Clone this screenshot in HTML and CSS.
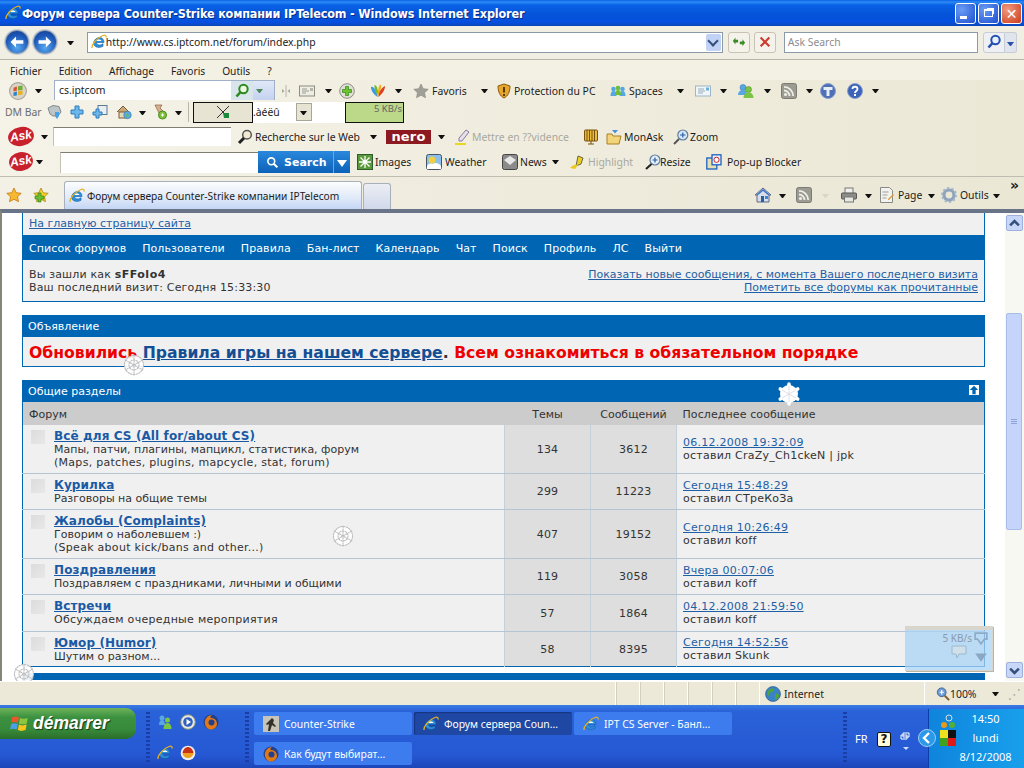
FILE: index.html
```html
<!DOCTYPE html>
<html lang="ru">
<head>
<meta charset="utf-8">
<title>Форум сервера Counter-Strike компании IPTelecom</title>
<link rel="stylesheet" href="styles.css">
</head>
<body>
<svg class="defs" width="0" height="0" aria-hidden="true">
  <symbol id="ie" viewBox="0 0 16 16"><path d="M2.500 9.500C3 5.500 6 3.500 8.500 3.500c2.800 0 4.500 2 4.500 5H5.500c.2 2.600 3.500 3.500 6.500 1.200v2.600c-4 2.400-9.300.7-9.500-2.800z" fill="#2f8fd8" stroke="#0f5ca8" stroke-width=".6"/><path d="M1 14C.5 11 5 4 12 1.500c2-.7 3.500 0 3 2" fill="none" stroke="#e8b020" stroke-width="1.300"/><path d="M5.700 7h4.700C10.200 5 6 5 5.700 7z" fill="#fff"/></symbol>
  <symbol id="star" viewBox="0 0 16 16"><path d="M8 1l2.200 4.700 5 .6-3.700 3.400 1 5L8 12.300 3.500 14.700l1-5L.8 6.300l5-.6z" fill="#f5b82e" stroke="#c67a10" stroke-width=".8"/></symbol>
  <symbol id="gstar" viewBox="0 0 16 16"><path d="M8 1l2.200 4.700 5 .6-3.700 3.400 1 5L8 12.300 3.500 14.700l1-5L.8 6.300l5-.6z" fill="#f5d02e" stroke="#b08a10" stroke-width=".8"/><path d="M2 9h3V6h3v3h3v3H8v3H5v-3H2z" fill="#6cbf2f" stroke="#2f7d10" stroke-width=".6"/></symbol>
  <symbol id="greystar" viewBox="0 0 16 16"><path d="M8 1l2.200 4.700 5 .6-3.700 3.400 1 5L8 12.300 3.500 14.700l1-5L.8 6.300l5-.6z" fill="#a0a098" stroke="#85857d" stroke-width=".6"/></symbol>
  <symbol id="live" viewBox="0 0 16 16"><circle cx="8" cy="8" r="7.500" fill="#d8d4c8" stroke="#a8a498"/><path d="M4 5l3-1v3.500L4 8.500z" fill="#e05030"/><path d="M8 3.800l4-.8v4l-4 .5z" fill="#70b030"/><path d="M4 9.300l3-.9v3.500l-3 .6z" fill="#3080d0"/><path d="M8 8.300l4-.5V11l-4 .8z" fill="#eab020"/></symbol>
  <symbol id="mag" viewBox="0 0 16 16"><circle cx="9.500" cy="6" r="4.200" fill="#eef6e4" stroke="#2c8a1c" stroke-width="2"/><path d="M6.500 9l-4 4.500" stroke="#2c8a1c" stroke-width="2.600"/></symbol>
  <symbol id="magb" viewBox="0 0 16 16"><circle cx="9.500" cy="6" r="4.200" fill="#e8f0fc" stroke="#2450b0" stroke-width="2"/><path d="M6.500 9l-4 4.500" stroke="#2450b0" stroke-width="2.600"/></symbol>
  <symbol id="magk" viewBox="0 0 16 16"><circle cx="10" cy="5.800" r="4.300" fill="#f2ead0" stroke="#555" stroke-width="1.500"/><path d="M7 9l-5 5" stroke="#222" stroke-width="3"/></symbol>
  <symbol id="plus" viewBox="0 0 16 16"><circle cx="8" cy="8" r="7.300" fill="#e0dfd4" stroke="#908e84"/><path d="M6.500 3.500h3v3h3v3h-3v3h-3v-3h-3v-3h3z" fill="#6fc32c" stroke="#2c8a1c" stroke-width=".7"/></symbol>
  <symbol id="card" viewBox="0 0 16 16"><rect x=".5" y="3" width="15" height="10" fill="#efeee4" stroke="#8c8c80"/><path d="M3 6h5M3 8h7M3 10h4" stroke="#9a9a90"/><rect x="11" y="5" width="3" height="3" fill="#b4b4a8"/></symbol>
  <symbol id="msn" viewBox="0 0 16 16"><path d="M1 4c2-1 4 1 6 7L8 14C4 12 1 8 1 4z" fill="#3d9ae0"/><path d="M4.500 2c2 0 3 3 3.500 7l-.5 3C5.500 9 4 5 4.500 2z" fill="#70b82a"/><path d="M10 1.500c2 .5 1 5-1 10L8 14c-.5-4 0-9 2-12.500z" fill="#f0b010"/><path d="M15 3c0 4-3 8-6.500 11 0-5 3-9 6.500-11z" fill="#e03c20"/></symbol>
  <symbol id="shield" viewBox="0 0 16 16"><path d="M8 1l6 2c0 6-2 10-6 12C4 13 2 9 2 3z" fill="#e6a72a" stroke="#8a5a10"/><path d="M7 4h2v5.500H7zM7 11h2v2H7z" fill="#5a3a08"/></symbol>
  <symbol id="spaces" viewBox="0 0 16 16"><circle cx="3.500" cy="6" r="2.300" fill="#55a7e0"/><circle cx="8" cy="5" r="2.300" fill="#6fbe38"/><circle cx="12.500" cy="6" r="2.300" fill="#55a7e0"/><path d="M.5 13c0-3.500 1-5 3-5s3 1.500 3 5zM9.500 13c0-3.500 1-5 3-5s3 1.500 3 5z" fill="#55a7e0"/><path d="M5 12c0-3.500 1-5 3-5s3 1.500 3 5z" fill="#6fbe38"/></symbol>
  <symbol id="mail" viewBox="0 0 16 16"><rect x=".5" y="3" width="15" height="10" fill="#f0f5f8" stroke="#9db6c8"/><path d="M3 6h6M3 8h7M3 10h5" stroke="#96aabc"/><rect x="11" y="4.500" width="3" height="3" fill="#6ab0dc"/></symbol>
  <symbol id="people" viewBox="0 0 16 16"><circle cx="5" cy="4.500" r="3" fill="#5aa6e0" stroke="#2a70a8" stroke-width=".5"/><path d="M0 12c0-3 2-5 5-5s4 2 4 5z" fill="#5aa6e0"/><circle cx="10.500" cy="6.500" r="3" fill="#7cc443" stroke="#3d8518" stroke-width=".5"/><path d="M5.500 15c0-3.500 2-5.500 5-5.500s5 2 5 5.500z" fill="#7cc443"/></symbol>
  <symbol id="rss" viewBox="0 0 16 16"><rect x=".5" y=".5" width="15" height="15" rx="2" fill="#9b9b92" stroke="#7c7c74"/><circle cx="4.500" cy="11.500" r="1.600" fill="#efefe8"/><path d="M3 7.500c3 0 5.500 2.500 5.500 5.500M3 3.800c5 0 9.200 4.200 9.200 9.200" fill="none" stroke="#efefe8" stroke-width="1.800"/></symbol>
  <symbol id="tool" viewBox="0 0 16 16"><circle cx="8" cy="8" r="7.500" fill="#4d70b8" stroke="#8aa0cc"/><path d="M3.500 4h9v3h-3v6h-3V7h-3z" fill="#e8eef8"/></symbol>
  <symbol id="qm" viewBox="0 0 16 16"><circle cx="8" cy="8" r="7.500" fill="#3b63b8" stroke="#8aa0cc"/><path d="M5.500 6c0-3 5-3 5 0 0 2-2.500 2-2.500 4" fill="none" stroke="#fff" stroke-width="1.800"/><rect x="7" y="11" width="2" height="2" fill="#fff"/></symbol>
  <symbol id="hand" viewBox="0 0 16 16"><path d="M1 4l5-2.500 6 1L14 8l-3 4H6L3 10z" fill="#bcc6c8" stroke="#6a7478" stroke-width=".8"/><path d="M8 8h4v4l-2 3-2-3z" fill="#4aa0e0"/></symbol>
  <symbol id="bplus" viewBox="0 0 16 16"><path d="M6 2h4v4h4v4h-4v4H6v-4H2V6h4z" fill="#6db6ea" stroke="#2d7cc0"/></symbol>
  <symbol id="bcopy" viewBox="0 0 16 16"><rect x="6" y="1.500" width="9" height="9" fill="#e8eef2" stroke="#5c7a90"/><path d="M4 5h3v3h3v3H7v3H4v-3H1V8h3z" fill="#6db6ea" stroke="#2d7cc0"/></symbol>
  <symbol id="homeg" viewBox="0 0 16 16"><path d="M1 8l6-6 6 6" fill="#c8a878" stroke="#7a5c30"/><rect x="3" y="8" width="8" height="6" fill="#e4d8b8" stroke="#7a5c30"/><circle cx="11.500" cy="11" r="3.800" fill="#5aaae0" stroke="#2a70a8" stroke-width=".5"/><path d="M10 9.500l3 2-2 2z" fill="#6fbe38"/></symbol>
  <symbol id="tack" viewBox="0 0 16 16"><path d="M3 1h7l-2 3 3 3-4 2z" fill="#d8b090" stroke="#8a6040" stroke-width=".7"/><circle cx="10.500" cy="11" r="4" fill="#82c040" stroke="#4a8a20"/><path d="M9 11h3M10.500 9.500v3" stroke="#fff"/></symbol>
  <symbol id="pen" viewBox="0 0 16 16"><path d="M11 1l3 2-7 9H4v-3z" fill="#e4dfe8" stroke="#8a7a9a"/><path d="M0 15h11" stroke="#e8d820" stroke-width="2"/></symbol>
  <symbol id="rad" viewBox="0 0 16 16"><rect x="1.500" y="1" width="13" height="11" rx="1" fill="#e8bb3e" stroke="#7a5208"/><path d="M4 1v11M6.500 1v11M9 1v11M11.500 1v11" stroke="#7a5208"/><path d="M8 12v3M5 15h6" stroke="#7a5208"/></symbol>
  <symbol id="folder" viewBox="0 0 16 16"><path d="M1 5h5l1 2h8l-2 8H1z" fill="#f2d47a" stroke="#a88020"/><path d="M6 1h6L9 4.500z" fill="#4a90d8"/></symbol>
  <symbol id="zoomi" viewBox="0 0 16 16"><circle cx="9.800" cy="6" r="5" fill="#d8e6f4" stroke="#5c7c9a" stroke-width="1.200"/><path d="M7 6h5.500M9.800 3.500v5" stroke="#2a5ca8" stroke-width="1.200"/><path d="M6 10l-5 5" stroke="#555" stroke-width="2"/></symbol>
  <symbol id="imgs" viewBox="0 0 16 16"><rect x=".5" y=".5" width="15" height="15" fill="#5a9a3a" stroke="#2d5c2d"/><path d="M8 2v12M2 8h12M3.500 3.500l9 9M12.500 3.500l-9 9" stroke="#fff" stroke-width="1.300"/></symbol>
  <symbol id="wthr" viewBox="0 0 16 16"><rect x=".5" y=".5" width="15" height="15" rx="2" fill="#8cc0ea" stroke="#456"/><circle cx="6" cy="6" r="3.500" fill="#f2d040"/><path d="M1 12c1-3 5-3 6-2 2-2 6-1 8 2v3H1z" fill="#fff"/></symbol>
  <symbol id="news" viewBox="0 0 16 16"><rect x=".5" y=".5" width="15" height="15" rx="2" fill="#8b8b8b" stroke="#444"/><path d="M2 6l6-4 6 4-6 5z" fill="#e8e8e8"/></symbol>
  <symbol id="hl" viewBox="0 0 16 16"><path d="M8 2l5 2-2 6-5 2z" fill="#ecd020" stroke="#333" stroke-width=".7"/><path d="M0 14c2-2 4-4 8-3l-3 4z" fill="#ecc820"/></symbol>
  <symbol id="rsz" viewBox="0 0 16 16"><circle cx="10" cy="6" r="5" fill="#e4eef6" stroke="#5c7c9a" stroke-width="1.200"/><path d="M7.500 6h5M10 3.500v5" stroke="#2a5ca8" stroke-width="1.200"/><path d="M6.500 10L1 15" stroke="#222" stroke-width="2"/></symbol>
  <symbol id="popup" viewBox="0 0 16 16"><rect x=".8" y="4" width="10" height="11" fill="#e8e0b4" stroke="#1a62c0" stroke-width="1.300"/><rect x="6" y=".8" width="9" height="10" fill="#e8f0fa" stroke="#1a62c0" stroke-width="1.300"/><circle cx="10.500" cy="5.800" r="2.600" fill="#fff" stroke="#d02020"/></symbol>
  <symbol id="home" viewBox="0 0 16 16"><path d="M0 8l8-7 8 7-2 0v7H2V8z" fill="#d8dee8" stroke="#5a6a8a"/><path d="M2 8l6-5 6 5" fill="none" stroke="#3a70c8" stroke-width="1.500"/><rect x="6" y="9" width="3" height="6" fill="#2a5ca8"/><rect x="10" y="9" width="3" height="3" fill="#3a88d8"/></symbol>
  <symbol id="print" viewBox="0 0 16 16"><rect x="4" y="1" width="8" height="6" fill="#f0f0ea" stroke="#777"/><rect x=".5" y="6" width="15" height="6" rx="1" fill="#8c8c88" stroke="#555"/><rect x="3.500" y="10" width="9" height="5" fill="#e8e8e2" stroke="#777"/></symbol>
  <symbol id="page" viewBox="0 0 16 16"><path d="M1.500.5h9l3 3v12h-12z" fill="#f2f2ee" stroke="#8a8a84"/><path d="M3.500 5h6M3.500 8h5M3.500 11h4" stroke="#a0a09a"/><path d="M9 12l5-5 1 1-5 5H9z" fill="#d8a040"/></symbol>
  <symbol id="gear" viewBox="0 0 16 16"><circle cx="8" cy="8" r="5" fill="none" stroke="#8fa4bc" stroke-width="3.200"/><circle cx="8" cy="8" r="7" fill="none" stroke="#a8b8c8" stroke-width="2" stroke-dasharray="2.200 2.200"/></symbol>
  <symbol id="globe" viewBox="0 0 16 16"><circle cx="8" cy="8" r="7.500" fill="#3a82c8" stroke="#234e80" stroke-width=".6"/><path d="M3 5c2-3 5-3 6-2s-1 3-3 3-1 4-2 4-2-3-1-5zM10 8c2-1 4 0 4 2s-2 3-3 4-1-2-1-3z" fill="#4fa33c"/></symbol>
  <symbol id="zm" viewBox="0 0 16 16"><circle cx="6.500" cy="6" r="5" fill="#6b9cd8" stroke="#3a5a8a"/><path d="M4 6h5M6.500 3.500v5" stroke="#fff" stroke-width="1.400"/><path d="M10 10l5 5" stroke="#7a5c30" stroke-width="2.200"/></symbol>
  <symbol id="flake" viewBox="0 0 24 24"><circle cx="12" cy="12" r="9.500" fill="#fff" fill-opacity=".92"/><g fill="none" stroke="#bdbdbd" stroke-width="1.100" stroke-linecap="round" stroke-dasharray="1.500 1.300"><path d="M12 2v20M3.300 7l17.400 10M20.700 7L3.300 17"/><circle cx="12" cy="12" r="9.500"/><circle cx="12" cy="12" r="5"/></g></symbol>
  <symbol id="flake2" viewBox="0 0 24 24"><circle cx="12" cy="12" r="9" fill="#fff"/><g fill="none" stroke="#fff" stroke-width="3.600" stroke-linecap="round"><path d="M12 2v20M3.300 7l17.400 10M20.700 7L3.300 17"/></g><path stroke="#d4d8de" stroke-width=".8" d="M12 4v16M5 8l14 8M19 8L5 16"/></symbol>
  <symbol id="cs" viewBox="0 0 16 16"><rect width="16" height="16" fill="#c8c4b8"/><path d="M9 2l2 2-1 3 3 3-1 1-3-2-2 6H5l1-7-2 1-1-1 4-4z" fill="#33302a"/></symbol>
  <symbol id="ff" viewBox="0 0 16 16"><circle cx="8" cy="8" r="7.500" fill="#25408a"/><path d="M2 10c-1-5 3-9 7-9-2 1-2 3-1 3 3 0 6 2 6 6 0 3-3 5.500-6 5.500S2.500 13 2 10z" fill="#e07818"/><circle cx="8.500" cy="8.500" r="3" fill="#25408a"/></symbol>
  <symbol id="msn2" viewBox="0 0 16 16"><circle cx="5" cy="4" r="2.500" fill="#5aa6e0"/><path d="M2 11c0-3 1-5 3-5s3 2 3 5z" fill="#5aa6e0"/><circle cx="10.500" cy="6" r="2.500" fill="#7cc443"/><path d="M6.500 15c0-4 2-6 4-6s4 2 4 6z" fill="#7cc443"/></symbol>
  <symbol id="wmp" viewBox="0 0 16 16"><circle cx="8" cy="8" r="7.300" fill="#e8e8e8" stroke="#809070"/><circle cx="8" cy="8" r="4.800" fill="#3060c0"/><path d="M6.500 5l4.500 3-4.500 3z" fill="#fff"/></symbol>
  <symbol id="redc" viewBox="0 0 16 16"><circle cx="8" cy="8" r="7.300" fill="#f0f0f0"/><path d="M2.500 8C3 4 6 2 8 2s5 2 5.500 6z" fill="#c83018"/><path d="M2.500 8h11C13 12 10 13 8 13s-5-1-5.500-5z" fill="#f0a020"/></symbol>
  <symbol id="flag" viewBox="0 0 18 18"><path d="M2 3c2-1 4-1 6 0l-1 5c-2-1-4-1-6 0z" fill="#e8582a"/><path d="M9 3.500c2 1 4 1 7 0l-1 5c-2 1-5 1-7 0z" fill="#8cc63e"/><path d="M1 9c2-1 4-1 6 0l-1 5c-2-1-4-1-6 0z" fill="#4aa0e8"/><path d="M8 9.500c2 1 4 1 7 0l-1 5c-3 1-5 1-7 0z" fill="#f6c41c"/></symbol>
</svg>

<div class="win">
  <header class="title">
    <svg class="i16 title-ic"><use href="#ie"/></svg>
    <span class="title-text">Форум сервера Counter-Strike компании IPTelecom - Windows Internet Explorer</span>
    <span class="wbtn wmin"><b></b></span>
    <span class="wbtn wmax"><b></b></span>
    <span class="wbtn wclose">✕</span>
  </header>

  <div class="addr">
    <span class="nav-btn"><svg viewBox="0 0 24 24"><path d="M5 12l6-6v4h8v4h-8v4z" fill="#fff"/></svg></span>
    <span class="nav-btn nav-fwd"><svg viewBox="0 0 24 24"><path d="M19 12l-6-6v4H5v4h8v4z" fill="#fff"/></svg></span>
    <i class="ar ar-nav"></i>
    <div class="addr-box">
      <svg class="i16"><use href="#ie"/></svg>
      <span class="url">http://www.cs.iptcom.net/forum/index.php</span>
      <span class="drop"></span>
    </div>
    <span class="sq"><svg viewBox="0 0 16 16"><path d="M1 7l3-4v2.500h3v3H4V11zM15 9l-3 4v-2.500H9v-3h3V5z" fill="#3c8a28"/></svg></span>
    <span class="sq sq-stop"><svg viewBox="0 0 16 16"><path d="M3 3l10 10M13 3L3 13" stroke="#cc3a30" stroke-width="2.400"/></svg></span>
    <div class="ask-box">Ask Search</div>
    <span class="sch"><svg class="i16"><use href="#magb"/></svg></span>
    <span class="sch-d"><i class="ar ar-b"></i></span>
  </div>

  <nav class="menu">
    <span>Fichier</span><span>Edition</span><span>Affichage</span><span>Favoris</span><span>Outils</span><span>?</span>
  </nav>

  <div class="tb row2">
    <svg class="i18"><use href="#live"/></svg>
    <i class="ar"></i>
    <div class="wls"><span class="wls-in">cs.iptcom</span><span class="wls-go"><svg class="i16"><use href="#mag"/></svg></span><span class="wls-d"><i class="ar ar-g"></i></span></div>
    <svg class="sep-d" viewBox="0 0 10 12"><path d="M5 0v12" stroke="#b8b6a8"/><path d="M3.500 6L1 4v4zM6.500 6L9 4v4z" fill="#a8a89c"/></svg>
    <svg class="i16"><use href="#card"/></svg>
    <i class="ar"></i>
    <svg class="i16"><use href="#plus"/></svg>
    <svg class="i16"><use href="#msn"/></svg>
    <i class="ar"></i>
    <svg class="i16"><use href="#greystar"/></svg>
    <span>Favoris</span>
    <i class="ar"></i>
    <svg class="i16"><use href="#shield"/></svg>
    <span>Protection du PC</span>
    <svg class="i16"><use href="#spaces"/></svg>
    <span>Spaces</span>
    <i class="ar"></i>
    <svg class="i16"><use href="#mail"/></svg>
    <i class="ar"></i>
    <svg class="i16"><use href="#people"/></svg>
    <i class="ar"></i>
    <svg class="i16"><use href="#rss"/></svg>
    <i class="ar"></i>
    <svg class="i16"><use href="#tool"/></svg>
    <svg class="i16"><use href="#qm"/></svg>
    <i class="ar"></i>
  </div>

  <div class="tb row3">
    <span class="muted">DM Bar</span>
    <svg class="i16"><use href="#hand"/></svg>
    <svg class="i16"><use href="#bplus"/></svg>
    <svg class="i16"><use href="#bcopy"/></svg>
    <svg class="i16"><use href="#homeg"/></svg>
    <i class="ar"></i>
    <svg class="i16"><use href="#tack"/></svg>
    <i class="ar"></i>
    <i class="vsep"></i>
    <span class="boxed"><svg class="i16" viewBox="0 0 16 16"><path d="M2 2l12 12M14 2L2 14" stroke="#333"/><path d="M8 9h6v5H9z" fill="#1c8a3c"/></svg></span>
    <span class="sel"><span>.àéëû</span><i class="sel-b"><i class="ar"></i></i></span>
    <span class="wht"></span>
    <span class="kb">5 KB/s</span>
  </div>

  <div class="tb row4">
    <span class="ask">Ask</span>
    <i class="ar"></i>
    <span class="in in4"></span>
    <svg class="i16"><use href="#magk"/></svg>
    <span>Recherche sur le Web</span>
    <i class="ar"></i>
    <span class="nero">nero</span>
    <i class="ar"></i>
    <svg class="i16"><use href="#pen"/></svg>
    <span class="grey">Mettre en ??vidence</span>
    <svg class="i16"><use href="#rad"/></svg>
    <svg class="i16"><use href="#folder"/></svg>
    <span>MonAsk</span>
    <svg class="i16"><use href="#zoomi"/></svg>
    <span>Zoom</span>
  </div>

  <div class="tb row5">
    <span class="ask ask5">Ask</span>
    <i class="ar"></i>
    <div class="asks"><span class="in in5"></span><span class="sbtn"><svg viewBox="0 0 16 16"><circle cx="6.500" cy="6.500" r="4.200" fill="none" stroke="#fff" stroke-width="2"/><path d="M9.500 9.500L14 14" stroke="#fff" stroke-width="2.600"/></svg>Search</span><span class="sbtn-d"><i class="ar ar-w"></i></span></div>
    <svg class="i16"><use href="#imgs"/></svg>
    <span>Images</span>
    <svg class="i16"><use href="#wthr"/></svg>
    <span>Weather</span>
    <svg class="i16"><use href="#news"/></svg>
    <span>News</span>
    <i class="ar"></i>
    <svg class="i16"><use href="#hl"/></svg>
    <span class="grey">Highlight</span>
    <svg class="i16"><use href="#rsz"/></svg>
    <span>Resize</span>
    <svg class="i16"><use href="#popup"/></svg>
    <span>Pop-up Blocker</span>
  </div>

  <div class="tabs">
    <svg class="i16"><use href="#star"/></svg>
    <svg class="i16"><use href="#gstar"/></svg>
    <div class="tab"><svg class="i16"><use href="#ie"/></svg><span>Форум сервера Counter-Strike компании IPTelecom</span></div>
    <div class="tab-new"></div>
    <svg class="i16"><use href="#home"/></svg>
    <i class="ar"></i>
    <svg class="i16"><use href="#rss"/></svg>
    <i class="ar ar-faint"></i>
    <svg class="i16"><use href="#print"/></svg>
    <i class="ar"></i>
    <svg class="i16"><use href="#page"/></svg>
    <span>Page</span>
    <i class="ar"></i>
    <svg class="i16"><use href="#gear"/></svg>
    <span>Outils</span>
    <i class="ar"></i>
    <span class="more">»</span>
  </div>

  <main class="view">
    <div class="page">
      <section class="top">
        <a class="lnk" href="#">На главную страницу сайта</a>
      </section>
      <nav class="bar links">
        <span>Список форумов</span><span>Пользователи</span><span>Правила</span><span>Бан-лист</span><span>Календарь</span><span>Чат</span><span>Поиск</span><span>Профиль</span><span>ЛС</span><span>Выйти</span>
      </nav>
      <section class="info">
        <div class="info-l">Вы зашли как <b>sFFolo4</b><br>Ваш последний визит: Сегодня 15:33:30</div>
        <div class="info-r"><a class="lnk" href="#">Показать новые сообщения, с момента Вашего последнего визита</a><br><a class="lnk" href="#">Пометить все форумы как прочитанные</a></div>
      </section>
      <div class="bar head">Объявление</div>
      <section class="notice"><span class="red">Обновились</span> <a href="#" class="nlink">Правила игры на нашем сервере</a><b>.</b> <span class="red">Всем ознакомиться в обязательном порядке</span></section>
      <div class="bar head">Общие разделы<span class="upb"><svg viewBox="0 0 12 12"><path d="M6 1l5 5H8v5H4V6H1z" fill="#0066b3"/></svg></span></div>
      <table class="ft">
        <thead><tr><th class="c1">Форум</th><th class="c2">Темы</th><th class="c3">Сообщений</th><th class="c4">Последнее сообщение</th></tr></thead>
        <tbody>
          <tr><td class="c1"><div class="fc"><i class="bul"></i><div><a class="ftitle" href="#">Всё для CS (All for/about CS)</a><p>Мапы, патчи, плагины, мапцикл, статистика, форум<br><span class="lat">(Maps, patches, plugins, mapcycle, stat, forum)</span></p></div></div></td><td class="c2">134</td><td class="c3">3612</td><td class="c4"><a class="lnk" href="#">06.12.2008 19:32:09</a><br>оставил CraZy_Ch1ckeN | jpk</td></tr>
          <tr><td class="c1"><div class="fc"><i class="bul"></i><div><a class="ftitle" href="#">Курилка</a><p>Разговоры на общие темы</p></div></div></td><td class="c2">299</td><td class="c3">11223</td><td class="c4"><a class="lnk" href="#">Сегодня 15:48:29</a><br>оставил СТреКоЗа</td></tr>
          <tr><td class="c1"><div class="fc"><i class="bul"></i><div><a class="ftitle" href="#">Жалобы (Complaints)</a><p>Говорим о наболевшем :)<br><span class="lat">(Speak about kick/bans and other...)</span></p></div></div></td><td class="c2">407</td><td class="c3">19152</td><td class="c4"><a class="lnk" href="#">Сегодня 10:26:49</a><br>оставил koff</td></tr>
          <tr><td class="c1"><div class="fc"><i class="bul"></i><div><a class="ftitle" href="#">Поздравления</a><p>Поздравляем с праздниками, личными и общими</p></div></div></td><td class="c2">119</td><td class="c3">3058</td><td class="c4"><a class="lnk" href="#">Вчера 00:07:06</a><br>оставил koff</td></tr>
          <tr class="r37"><td class="c1"><div class="fc"><i class="bul"></i><div><a class="ftitle" href="#">Встречи</a><p><span class="lat">Обсуждаем очередные мероприятия</span></p></div></div></td><td class="c2">57</td><td class="c3">1864</td><td class="c4"><a class="lnk" href="#">04.12.2008 21:59:50</a><br>оставил koff</td></tr>
          <tr class="r35"><td class="c1"><div class="fc"><i class="bul"></i><div><a class="ftitle" href="#">Юмор (Humor)</a><p>Шутим о разном...</p></div></div></td><td class="c2">58</td><td class="c3">8395</td><td class="c4"><a class="lnk" href="#">Сегодня 14:52:56</a><br>оставил Skunk</td></tr>
        </tbody>
      </table>
      <div class="bar tail"></div>
    </div>
    <aside class="sb">
      <span class="sb-btn"><svg viewBox="0 0 12 12"><path d="M2.500 7.500L6 4l3.500 3.500" fill="none" stroke="#34507c" stroke-width="2"/></svg></span>
      <span class="sb-gap"></span>
      <span class="sb-thumb"><i></i></span>
      <span class="sb-fill"></span>
      <span class="sb-btn"><svg viewBox="0 0 12 12"><path d="M2.500 4.500L6 8l3.500-3.500" fill="none" stroke="#34507c" stroke-width="2"/></svg></span>
    </aside>
    <svg class="flake f1"><use href="#flake"/></svg>
    <svg class="flake f2"><use href="#flake2"/></svg>
    <svg class="flake f3"><use href="#flake"/></svg>
    <svg class="flake f4"><use href="#flake"/></svg>
    <div class="meter">
      <span class="meter-kb">5 KB/s</span>
      <svg class="meter-ic" viewBox="0 0 18 16"><path d="M1 2h14v8H8l-2 4-1-4H1z" fill="#cfe0ea" stroke="#9cb8cc"/></svg>
      <span class="meter-side"><svg viewBox="0 0 12 12"><path d="M1 1h10v5H9L6 10 3 6H1z" fill="none" stroke="#8cacc8" stroke-width="1.500"/></svg><svg viewBox="0 0 12 12"><path d="M1 3h10L6 10z" fill="#8aa8c4"/></svg></span>
    </div>
  </main>

  <footer class="status">
    <span></span><i></i><i></i><i></i><i></i><i></i><i></i>
    <div class="st-net"><svg class="i16"><use href="#globe"/></svg>Internet</div>
    <div class="st-zoom"><svg class="i14"><use href="#zm"/></svg>100%<i class="ar"></i><span class="grip">⋰</span></div>
  </footer>

  <div class="taskbar">
    <div class="start"><svg class="flag"><use href="#flag"/></svg><span>démarrer</span></div>
    <i class="dots dots-1"></i>
    <div class="quick">
      <svg class="i16"><use href="#msn2"/></svg>
      <svg class="i16"><use href="#wmp"/></svg>
      <svg class="i16"><use href="#ff"/></svg>
      <svg class="i16"><use href="#ie"/></svg>
      <svg class="i16"><use href="#redc"/></svg>
    </div>
    <i class="dots"></i>
    <div class="tasks">
      <div class="task"><svg class="i16"><use href="#cs"/></svg><span>Counter-Strike</span></div>
      <div class="task active"><svg class="i16"><use href="#ie"/></svg><span>Форум сервера Coun...</span></div>
      <div class="task"><svg class="i16"><use href="#ie"/></svg><span>IPT CS Server - Банл...</span></div>
      <div class="task"><svg class="i16"><use href="#ff"/></svg><span>Как будут выбират...</span></div>
    </div>
    <i class="dots dots-r"></i>
    <span class="fr">FR</span>
    <span class="help">?</span>
    <span class="updn"><svg viewBox="0 0 12 24"><path d="M3 3h6v4H3zM1 5h6v4H1z" fill="none" stroke="#fff"/><path d="M3 17h6l-3 3z" fill="#cfe0ff"/></svg></span>
    <span class="chev"><svg viewBox="0 0 16 16"><path d="M10 3L5 8l5 5" fill="none" stroke="#fff" stroke-width="2.400"/></svg></span>
    <div class="tray">
      <div class="tray-ic">
        <svg class="i16" viewBox="0 0 16 16"><circle cx="9" cy="4" r="3" fill="none" stroke="#ddd"/><circle cx="4" cy="11" r="3" fill="#e89a18"/><circle cx="12" cy="11" r="3" fill="#54b030"/></svg>
        <svg class="i16" viewBox="0 0 16 16"><rect width="8" height="8" fill="#f0e020"/><rect x="8" width="8" height="8" fill="#111"/><rect y="8" width="8" height="8" fill="#40a020"/><rect x="8" y="8" width="8" height="8" fill="#e01818"/></svg>
      </div>
      <div class="clock"><span>14:50</span><span>lundi</span><span>8/12/2008</span></div>
    </div>
  </div>
</div>
</body>
</html>
```
FILE: styles.css
```css
* { box-sizing: border-box; }
html, body { margin: 0; height: 768px; overflow: hidden; }
body { font-family: "Noto Sans", "DejaVu Sans", sans-serif; font-size: 10.400px; color: #1c1c1c; background: #ece9d8; }
.defs { position: absolute; }
svg { display: block; flex: none; }
i { font-style: normal; display: block; }
a { color: inherit; }
.i14 { width: 14px; height: 14px; }
.i16 { width: 16px; height: 16px; }
.i18 { width: 18px; height: 18px; }
.win { display: flex; flex-direction: column; width: 1024px; height: 768px; }

/* title bar */
.title { height: 26px; flex: none; display: flex; align-items: center; padding: 0 2px 0 5px; color: #fff;
  background: linear-gradient(#0a5fe8 0, #2c8cf4 2px, #0a62e6 5px, #0454d8 14px, #0650e0 22px, #0a46b8 26px); }
.title-ic { margin-right: 1px; }
.title-text { flex: 1; font: bold 12.500px "DejaVu Sans Condensed", "DejaVu Sans", sans-serif; letter-spacing: -.16px; text-shadow: 1px 1px 0 #0a2c88; }
.wbtn { width: 21px; height: 21px; margin-left: 2.500px; border: 1px solid #fff; border-radius: 3px; display: flex; align-items: center; justify-content: center;
  background: radial-gradient(circle at 30% 30%, #6a9cf4, #1e50d0); color: #fff; position: relative; }
.wclose { background: radial-gradient(circle at 30% 30%, #f09a80, #cc3a18); font-size: 14px; font-weight: bold; margin-left: 2px; }
.wmin b { display: block; width: 7px; height: 3px; background: #fff; margin-top: 8px; margin-right: 4px; }
.wmax b { display: block; width: 9px; height: 8px; border: 1px solid #fff; border-top-width: 2px; box-shadow: 2px -2px 0 -1px #fff; }

/* address */
.addr { height: 34px; flex: none; display: flex; align-items: center; padding: 0 7px 1px 5px; border-bottom: 1px solid #b8b6a8; background: #f1efe3; }
.nav-btn { width: 24px; height: 24px; border-radius: 50%; background: radial-gradient(circle at 50% 75%, #58a8f0, #1c58b8 60%, #163a88); border: 1px solid #8a9ab0; box-shadow: 0 0 0 1px #c8cdd4; margin-right: 4px; }
.ar { width: 7px; height: 4px; margin-top: 1px; border-top: 4px solid #111; border-left: 3.500px solid transparent; border-right: 3.500px solid transparent; }
.ar-nav { margin-left: 6px; margin-right: 13px; }
.ar-b { border-top-color: #2a50a8; }
.ar-g { border-top-color: #4a8a5a; }
.ar-w { border-top: 7px solid #fff; border-left-width: 5px; border-right-width: 5px; width: 10px; height: 7px; }
.ar-faint { border-top-color: #d8d6c8; }
.addr-box { width: 639px; height: 21px; background: #fff; border: 1px solid #8a9aa8; display: flex; align-items: center; padding: 0 0 0 3px; }
.url { flex: 1; margin-left: -1px; }
.drop { width: 15px; height: 17px; margin-right: 1px; border-radius: 2px; background: #c2d2f4; position: relative; }
.drop::after { content: ""; display: block; width: 6px; height: 6px; border-right: 2px solid #34507c; border-bottom: 2px solid #34507c; transform: rotate(45deg); margin: 3px auto 0; }
.sq { width: 22px; height: 21px; margin-left: 5px; border: 1px solid #c8c4b4; border-radius: 3px; background: #f4f2ea; padding: 2px 3px; }
.sq-stop { margin-left: 4px; }
.ask-box { width: 195px; height: 21px; margin-left: 8px; border: 1px solid #8a9aa8; background: #fff; color: #8c8c8c; padding: 2px 3px; }
.sch { width: 22px; height: 21px; margin-left: 5px; background: #eef0f4; border: 1px solid #c8ccd4; border-radius: 3px 0 0 3px; padding: 1px 2px; }
.sch-d { width: 12px; height: 21px; background: #e0e4ec; border: 1px solid #c8ccd4; border-left: 0; border-radius: 0 3px 3px 0; padding: 8px 2px 0 2px; }

/* menu & toolbars */
.menu { height: 20px; flex: none; display: flex; align-items: center; gap: 17px; padding: 1px 0 0 10px; background: #f3f0e4; font-size: 10.200px; }
.tb, .tabs { flex: none; display: grid; align-items: center; justify-content: start; background: linear-gradient(90deg, #f5f2e8, #ebe8d6); white-space: nowrap; }
.row2 { height: 20px; padding-left: 9px; grid-template-columns: 26px 19px 229px 16px 26px 14px 31px 25px 18px 19px 49px 15px 18px 96px 19px 48px 18px 25px 18px 26px 17px 25px 14px 27px 25px auto; }
.row3 { height: 24px; padding-left: 5px; grid-template-columns: 42px 22px 23px 24px 23px 13px 23px 13px 5px 60px 60px 32px auto; }
.row4 { height: 26px; padding: 0 0 1px 8px; grid-template-columns: 33px 12px 184px 18px 115px 16px 52px 17px 17px 111px 23px 18px 49px 17px auto; }
.row5 { height: 27px; padding: 0 0 3px 9px; grid-template-columns: 27px 24px 297px 18px 51px 19px 57px 18px 32px 18px 18px 57px 15px 46px 21px auto; border-bottom: 1px solid #bfbdaf; }
.wls { width: 221px; height: 21px; display: flex; border: 1px solid #9fb0c8; background: #fff; }
.wls-in { width: 176px; padding: 2px 4px; }
.wls-go { width: 22px; background: #d8e6ec; padding: 2px 3px; }
.wls-d { width: 21px; background: linear-gradient(#e0e8f8, #c4d2f0); padding: 7px 3px; }
.sep-d { width: 10px; height: 12px; margin-left: -2px; }
.vsep { width: 1px; height: 20px; background: #b8b6a8; }
.muted { color: #6c6c6c; }
.grey { color: #a8a8a0; }
.boxed { width: 60px; height: 21px; border: 1px solid #111; background: #e8e4d4; display: flex; justify-content: center; align-items: center; }
.sel { width: 60px; height: 21px; background: #fff; display: flex; align-items: center; justify-content: space-between; padding: 0 1px 0 0; }
.sel-b { width: 16px; height: 18px; background: #e8e4d4; border: 1px solid #aaa69a; padding: 6px 3px; }
.wht { width: 32px; height: 21px; background: #fff; }
.kb { width: 59px; height: 21px; background: #bcd98a; border: 1px solid #111; color: #666; font-size: 9.500px; text-align: right; padding: 0 1px; line-height: 11px; }
.ask { width: 26px; height: 19px; border-radius: 50%; background: #c8202c; color: #fff; font: italic bold 12px/18px "Liberation Sans", sans-serif; text-align: center; transform: rotate(-10deg); }
.ask5 { width: 24px; }
.in { background: #fff; height: 19px; border-top: 1px solid #807e70; border-left: 1px solid #c4c2b4; }
.in4 { width: 178px; }
.in5 { width: 198px; height: 21px; margin-top: 1px; }
.nero { width: 45px; height: 14px; background: #8c1a20; color: #fff; font: bold 13px/14px "DejaVu Sans", sans-serif; letter-spacing: .2px; text-align: center; }
.asks { display: flex; }
.sbtn { width: 75px; height: 22px; display: flex; align-items: center; gap: 5px; padding: 1px 0 0 8px; color: #fff; background: linear-gradient(#2a88dc, #0c62b8); font: bold 11px "DejaVu Sans", sans-serif; }
.sbtn svg { width: 13px; height: 13px; }
.sbtn-d { width: 17px; height: 22px; background: linear-gradient(#2a88dc, #0c62b8); border-left: 1px solid #6aa8e0; padding: 8px 2px 0 3px; }

/* tabs */
.tabs { height: 32px; padding: 4px 0 0 6px; align-items: center; grid-template-columns: 27px 31px 299px 392px 24px 17px 26px 19px 24px 14px 19px 30px 13px 19px 33px 17px auto; background: linear-gradient(90deg, #f3f0e6, #eae7d5); }
.tab { width: 298px; height: 28px; display: flex; align-items: center; gap: 2px; padding-left: 4px; font-size: 10.200px; background: linear-gradient(#fcfdfe, #dfe9f8 60%, #c4d6f6); border: 1px solid #a8b0bc; border-bottom: 0; border-radius: 3px 3px 0 0; }
.tab-new { width: 28px; height: 26px; align-self: end; background: linear-gradient(#eceef4, #d0d8ea); border: 1px solid #a8b0bc; border-bottom: 0; border-radius: 3px 3px 0 0; }
.more { font: bold 14px/14px "DejaVu Sans", sans-serif; align-self: start; margin-top: -3px; }

/* page viewport */
.view { position: relative; flex: 1; min-height: 0; display: flex; overflow: hidden; background: #fff; border-top: 4px solid #6a7488; border-left: 2px solid #85857a; font-family: "DejaVu Sans", Verdana, sans-serif; }
.page { width: 1003px; padding: 0 20px; color: #333; font-size: 11px; line-height: 13px; }
.top { height: 22px; background: #f0f0f0; border: 1px solid #0066b3; border-width: 0 1px; padding: 0 6px 5px; display: flex; flex-direction: column; justify-content: flex-end; }
.lnk { color: #1f5fa5; text-decoration: underline; }
.bar { background: #0066b3; color: #fff; }
.links { height: 25px; display: flex; align-items: center; gap: 16px; padding: 1px 0 0 7px; letter-spacing: .08px; }
.info { height: 42px; background: #f0f0f0; border: 1px solid #0066b3; border-top: 0; display: flex; justify-content: space-between; padding: 8px 6px 0; margin-bottom: 13px; }
.info-l { letter-spacing: .16px; }
.info-l b { letter-spacing: .5px; }
.info-r { text-align: right; }
.head { height: 22px; line-height: 24px; padding-left: 6px; display: flex; justify-content: space-between; padding-right: 6px; }
.upb { width: 10px; height: 10px; background: #fff; margin-top: 5px; }
.notice { height: 30px; background: #f0f0f0; border: 1px solid #0066b3; border-top: 0; padding: 5px 6px 0; font: bold 15.650px/22px "DejaVu Sans", sans-serif; margin-bottom: 13px; white-space: nowrap; }
.red { color: #ee0000; }
.nlink { color: #134f94; }
.ft { width: 963px; border-collapse: collapse; table-layout: fixed; border: 1px solid #0066b3; border-top: 0; background: #f0f0f0; }
.ft th { height: 23px; background: #cccccc; font-weight: normal; padding: 1px 0 0; border: 0; }
.ft th.c1 { text-align: left; padding-left: 6px; width: 482px; }
.ft th.c2 { width: 86px; }
.ft th.c3 { width: 86px; }
.ft th.c4 { text-align: left; padding-left: 6px; letter-spacing: .1px; }
.ft td { padding: 0; border-bottom: 1px solid #b4c4d2; vertical-align: middle; }
.ft tr:last-child td { border-bottom: 0; }
.ft td.c2, .ft td.c3 { text-align: center; background: #dedede; border-left: 1px solid #c4d0da; letter-spacing: .2px; }
.ft td.c4 { padding-left: 6px; border-left: 1px solid #c4d0da; letter-spacing: .25px; }
.fc { display: flex; gap: 9px; padding: 4px 0 4px 8px; }
.r37 .fc { padding-bottom: 5px; }
.r35 .fc { padding-bottom: 3px; }
.bul { width: 14px; height: 14px; margin-top: 1px; flex: none; background: linear-gradient(135deg, #dcdcdc, #e8e8e8); }
.ftitle { font: bold 12px/14px "DejaVu Sans", sans-serif; letter-spacing: .1px; color: #1a5aa5; display: block; white-space: nowrap; }
.fc p { margin: 0; line-height: 13px; }
.lat { letter-spacing: .28px; }
.tail { height: 7px; margin-top: 6px; }
.sb { width: 19px; display: flex; flex-direction: column; background: #f8f8f2; padding-top: 2px; }
.sb-btn { width: 17px; height: 16px; margin-left: 1px; background: #c8d6f8; border: 1px solid #9eb0dc; border-radius: 2px; flex: none; }
.sb-gap { height: 82px; flex: none; }
.sb-thumb { height: 217px; flex: none; margin-left: 1px; width: 16px; background: #c4d4fa; border: 1px solid #aabce8; border-radius: 2px; display: flex; align-items: center; justify-content: center; }
.sb-thumb i { width: 6px; height: 6px; background: repeating-linear-gradient(#8ea4d8 0 1px, transparent 1px 2px); }
.sb-fill { flex: 1; }
.sb-btn:last-child { margin-bottom: 3px; }
.flake { position: absolute; width: 24px; height: 24px; }
.f1 { left: 120px; top: 140px; }
.f2 { left: 775px; top: 169px; }
.f3 { left: 329px; top: 311px; }
.f4 { left: 10px; top: 449px; }
.meter { position: absolute; left: 903px; top: 413px; width: 88px; height: 45px; background: rgba(170, 212, 245, .75); border: 1px solid #d8d6cc; border-width: 4px 1px 1px 0; box-shadow: 1px 1px 0 #b8b6a8; color: #8a9aa8; }
.meter-kb { position: absolute; right: 20px; top: 1px; font: 10px "Noto Sans", sans-serif; }
.meter-ic { position: absolute; left: 46px; top: 14px; width: 18px; height: 16px; }
.meter-side { position: absolute; right: 4px; top: 2px; width: 14px; display: flex; flex-direction: column; gap: 4px; }
.meter-side svg { width: 14px; height: 14px; }

/* status */
.status { height: 24px; flex: none; display: grid; grid-template-columns: 615px 24px 24px 24px 24px 24px 24px 165px 100px; background: #ece9d8; border-top: 1px solid #fff; align-items: stretch; }
.status > i { border-left: 1px solid #fff; box-shadow: inset 1px 0 0 #d4d0c0; }
.st-net { display: flex; align-items: center; gap: 3px; padding-left: 5px; border-left: 1px solid #fff; }
.st-zoom { display: flex; align-items: center; gap: 0; padding-left: 11px; border-left: 1px solid #fff; position: relative; }
.st-zoom .ar { margin-left: 16px; }
.grip { color: #b0ac9c; font-size: 14px; margin-left: 8px; }

/* taskbar */
.taskbar { height: 63px; flex: none; display: flex; align-items: flex-start; color: #fff; background: linear-gradient(#3a7ce6 0, #2a62d8 6px, #2658d4 50px, #1c46b8 63px); }
.start { width: 136px; height: 31px; margin-top: 3px; display: flex; align-items: center; gap: 3px; padding-left: 10px; border-radius: 0 10px 10px 0; background: linear-gradient(#6fb35a, #3b9140 30%, #378a3a 70%, #2a6e2a); font: italic bold 17.500px "Liberation Sans", sans-serif; text-shadow: 1px 1px 1px #143c14; }
.flag { width: 20px; height: 20px; }
.dots { width: 4px; height: 52px; margin-top: 7px; background: repeating-linear-gradient(#1a3ea8 0 2px, transparent 2px 4px); flex: none; }
.dots-1 { margin-left: 10px; }
.quick { width: 95px; display: grid; grid-template-columns: repeat(3, 16px); column-gap: 7px; row-gap: 15px; padding: 9px 0 0 7px; }
.tasks { width: 478px; flex: none; margin-left: 5px; margin-top: 7px; display: grid; grid-template-columns: 160px 160px 158px; grid-auto-rows: 23px; row-gap: 7px; }
.task { width: 158px; height: 23px; display: flex; align-items: center; gap: 5px; padding-left: 9px; background: #3c7cee; border-radius: 2px; white-space: nowrap; }
.task.active { background: #1e48a4; box-shadow: inset 1px 1px 1px #163480; }
.dots-r { margin-left: 111px; }
.fr { margin: 26px 0 0 8px; width: 13px; flex: none; font-size: 11px; }
.help { width: 14px; height: 15px; flex: none; margin: 27px 0 0 9px; background: #fffbd8; border: 1px solid #111; border-radius: 2px; color: #111; font: bold 12px/13px "DejaVu Sans", sans-serif; text-align: center; }
.updn { width: 12px; height: 24px; flex: none; margin: 25px 0 0 9px; }
.chev { width: 18px; height: 18px; flex: none; margin: 24px 0 0 6px; border-radius: 50%; background: #2c98e8; border: 1px solid #9cd0f4; z-index: 1; }
.tray { flex: 1; height: 59px; margin: 4px 0 0 -8px; background: linear-gradient(90deg, #0f84dc, #18a0ec); border-left: 1px solid #0a3ea8; display: flex; padding: 3px 9px 0 11px; }
.tray-ic { display: flex; flex-direction: column; gap: 0; padding-top: 2px; }
.clock { flex: 1; display: flex; flex-direction: column; align-items: center; gap: 6px; font-size: 11px; line-height: 13px; }
```
